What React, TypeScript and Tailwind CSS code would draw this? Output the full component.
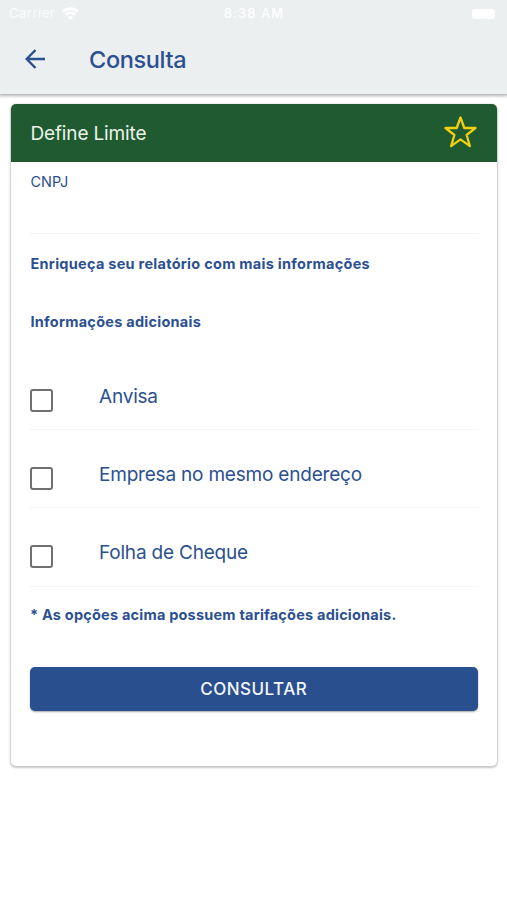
const options = ['Anvisa', 'Empresa no mesmo endereço', 'Folha de Cheque'];

function StatusBar() {
  return (
    <div className="grid h-[27px] grid-cols-3 items-center pl-[9px] pr-3 text-[13px] text-white">
      <div className="flex items-center gap-[7px]">
        <span className="tracking-[0.5px] opacity-80">Carrier</span>
        <svg width="17" height="13" viewBox="0 0 17 13" fill="none" stroke="currentColor" strokeWidth="2.8">
          <path d="M1 4.6C5.2.6 11.8.6 16 4.6" />
          <path d="M3.8 7.7c2.7-2.5 6.7-2.5 9.4 0" />
          <path d="M8.5 12.8 5.8 10c1.6-1.4 3.8-1.4 5.4 0Z" fill="currentColor" stroke="none" />
        </svg>
      </div>
      <span className="pl-[4px] text-center font-medium tracking-[1.05px]">8:38 AM</span>
      <div className="h-[10px] w-[23px] justify-self-end rounded-[3px] bg-white" />
    </div>
  );
}

function TopBar() {
  return (
    <header className="h-[94px] bg-[#ebeff0] shadow-[0_1px_3px_1px_rgba(0,0,0,0.3)]">
      <StatusBar />
      <div className="flex h-[65px] items-center pl-[25px]">
        <svg className="-mt-[2px]" width="20" height="20" viewBox="0 0 20 20" fill="none" stroke="currentColor" strokeWidth="2.4">
          <path d="M10.5 1 1.7 10l8.8 9M1.7 10H20" />
        </svg>
        <h1 className="ml-11 text-[23.5px] font-medium leading-8 tracking-[-0.35px]">Consulta</h1>
      </div>
    </header>
  );
}

function OptionRow({ label, last }: { label: string; last: boolean }) {
  return (
    <label className={`flex border-b border-[#f6f6f6] ${last ? 'h-[79px]' : 'h-[78px]'}`}>
      <span className="mt-[37px] h-[23px] w-[23px] rounded-[3px] border-[2.5px] border-[#707070]" />
      <span className="ml-[46px] mt-[31px] text-[19px] leading-7 tracking-[-0.2px]">{label}</span>
    </label>
  );
}

export default function App() {
  return (
    <div className="h-[900px] bg-white font-['Inter',sans-serif] text-[#2b5091]">
      <TopBar />
      <main className="px-[10.5px] pt-[10px]">
        <section className="h-[662px] overflow-hidden rounded-[5px] bg-white shadow-[0_1px_2px_1px_rgba(0,0,0,0.22)]">
          <div className="flex h-[58px] items-center justify-between bg-[#1f5a30] pl-5 pr-[20px] text-[#edf3e8]">
            <h2 className="mt-[2px] text-[19px] tracking-[-0.15px]">Define Limite</h2>
            <svg className="-mt-[2px]" width="33" height="32" viewBox="0 0 33 32" fill="none" stroke="#f0d010" strokeWidth="2.3" strokeLinejoin="round">
              <path d="m16.5 1.5 3.8 10.5h11.2l-8.9 7 3.3 11.1-9.4-6.7-9.4 6.7L10.4 19l-8.9-7h11.2Z" />
            </svg>
          </div>
          <div className="flex flex-col pl-[19.5px] pr-[18px]">
            <div className="h-[72px] border-b border-[#f4f4f4] pl-[0.5px] pt-[10px] text-[14.5px] leading-5">CNPJ</div>
            <p className="mt-[20px] pl-[0.5px] text-[14.5px] font-bold leading-5 tracking-[0.27px]">Enriqueça seu relatório com mais informações</p>
            <p className="mt-[38px] pl-[0.5px] text-[14.5px] font-bold leading-5 tracking-[0.25px]">Informações adicionais</p>
            <div className="mt-[20px]">
              {options.map((label, i) => (
                <OptionRow key={label} label={label} last={i === options.length - 1} />
              ))}
            </div>
            <p className="mt-[18px] text-[14.5px] font-bold leading-5 tracking-[0.21px]">* As opções acima possuem tarifações adicionais.</p>
            <button className="mr-[1px] mt-[42px] h-11 rounded-[5px] bg-[#294f8e] pt-[2px] text-[17px] font-medium tracking-[0.5px] text-[#f2f6fc] shadow-[0_1px_2px_rgba(0,0,0,0.35)]">
              CONSULTAR
            </button>
          </div>
        </section>
      </main>
    </div>
  );
}
